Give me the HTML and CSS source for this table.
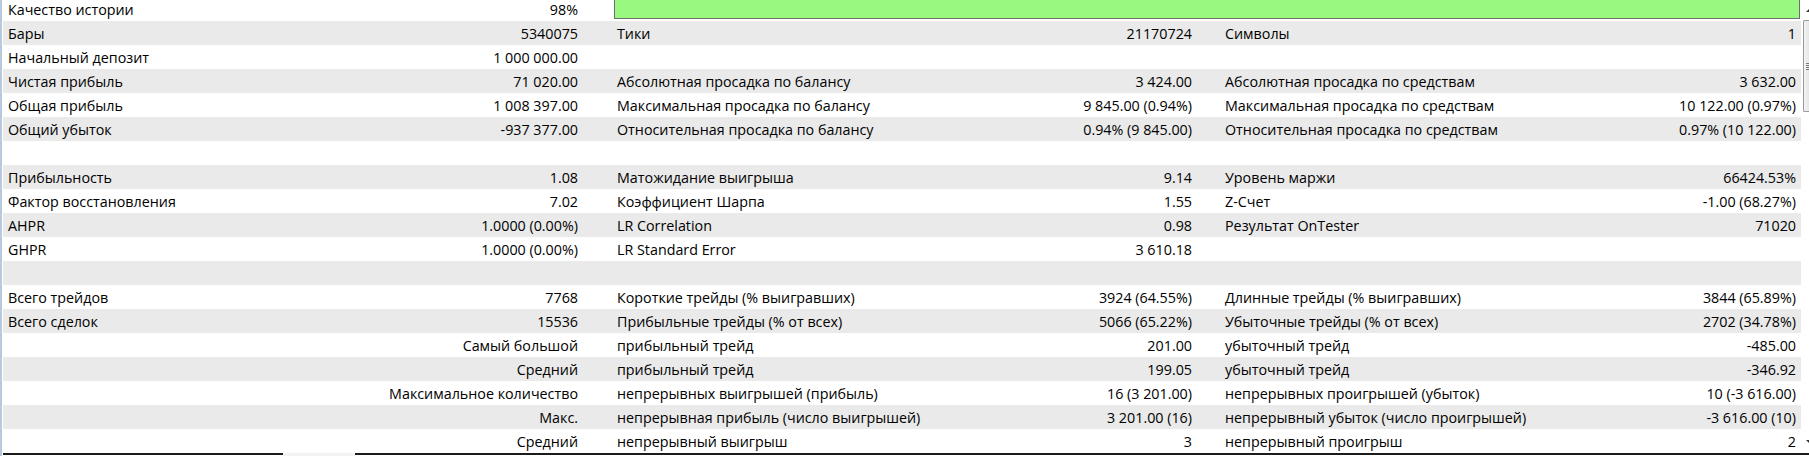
FILE: index.html
```html
<!DOCTYPE html>
<html lang="ru">
<head>
  <meta charset="UTF-8">
  <title>Отчет тестера</title>
  <link rel="stylesheet" href="styles.css">
</head>
<body>
  <div class="window">
    <div class="frame">
      <!-- Report table -->
      <div class="report">
        <div class="row">
          <div class="c1">Качество истории</div><div class="c2">98%</div>
          <div class="bar-cell"><div class="quality-bar"></div></div>
        </div>
        <div class="row">
          <div class="c1">Бары</div><div class="c2">5340075</div>
          <div class="c3">Тики</div><div class="c4">21170724</div>
          <div class="c5">Символы</div><div class="c6">1</div>
        </div>
        <div class="row">
          <div class="c1">Начальный депозит</div><div class="c2">1 000 000.00</div>
        </div>
        <div class="row">
          <div class="c1">Чистая прибыль</div><div class="c2">71 020.00</div>
          <div class="c3">Абсолютная просадка по балансу</div><div class="c4">3 424.00</div>
          <div class="c5">Абсолютная просадка по средствам</div><div class="c6">3 632.00</div>
        </div>
        <div class="row">
          <div class="c1">Общая прибыль</div><div class="c2">1 008 397.00</div>
          <div class="c3">Максимальная просадка по балансу</div><div class="c4">9 845.00 (0.94%)</div>
          <div class="c5">Максимальная просадка по средствам</div><div class="c6">10 122.00 (0.97%)</div>
        </div>
        <div class="row">
          <div class="c1">Общий убыток</div><div class="c2">-937 377.00</div>
          <div class="c3">Относительная просадка по балансу</div><div class="c4">0.94% (9 845.00)</div>
          <div class="c5">Относительная просадка по средствам</div><div class="c6">0.97% (10 122.00)</div>
        </div>
        <div class="row"></div>
        <div class="row">
          <div class="c1">Прибыльность</div><div class="c2">1.08</div>
          <div class="c3">Матожидание выигрыша</div><div class="c4">9.14</div>
          <div class="c5">Уровень маржи</div><div class="c6">66424.53%</div>
        </div>
        <div class="row">
          <div class="c1">Фактор восстановления</div><div class="c2">7.02</div>
          <div class="c3">Коэффициент Шарпа</div><div class="c4">1.55</div>
          <div class="c5">Z-Счет</div><div class="c6">-1.00 (68.27%)</div>
        </div>
        <div class="row">
          <div class="c1">AHPR</div><div class="c2">1.0000 (0.00%)</div>
          <div class="c3">LR Correlation</div><div class="c4">0.98</div>
          <div class="c5">Результат OnTester</div><div class="c6">71020</div>
        </div>
        <div class="row">
          <div class="c1">GHPR</div><div class="c2">1.0000 (0.00%)</div>
          <div class="c3">LR Standard Error</div><div class="c4">3 610.18</div>
        </div>
        <div class="row"></div>
        <div class="row">
          <div class="c1">Всего трейдов</div><div class="c2">7768</div>
          <div class="c3">Короткие трейды (% выигравших)</div><div class="c4">3924 (64.55%)</div>
          <div class="c5">Длинные трейды (% выигравших)</div><div class="c6">3844 (65.89%)</div>
        </div>
        <div class="row">
          <div class="c1">Всего сделок</div><div class="c2">15536</div>
          <div class="c3">Прибыльные трейды (% от всех)</div><div class="c4">5066 (65.22%)</div>
          <div class="c5">Убыточные трейды (% от всех)</div><div class="c6">2702 (34.78%)</div>
        </div>
        <div class="row">
          <div class="c12">Самый большой</div>
          <div class="c3">прибыльный трейд</div><div class="c4">201.00</div>
          <div class="c5">убыточный трейд</div><div class="c6">-485.00</div>
        </div>
        <div class="row">
          <div class="c12">Средний</div>
          <div class="c3">прибыльный трейд</div><div class="c4">199.05</div>
          <div class="c5">убыточный трейд</div><div class="c6">-346.92</div>
        </div>
        <div class="row">
          <div class="c12">Максимальное количество</div>
          <div class="c3">непрерывных выигрышей (прибыль)</div><div class="c4">16 (3 201.00)</div>
          <div class="c5">непрерывных проигрышей (убыток)</div><div class="c6">10 (-3 616.00)</div>
        </div>
        <div class="row">
          <div class="c12">Макс.</div>
          <div class="c3">непрерывная прибыль (число выигрышей)</div><div class="c4">3 201.00 (16)</div>
          <div class="c5">непрерывный убыток (число проигрышей)</div><div class="c6">-3 616.00 (10)</div>
        </div>
        <div class="row">
          <div class="c12">Средний</div>
          <div class="c3">непрерывный выигрыш</div><div class="c4">3</div>
          <div class="c5">непрерывный проигрыш</div><div class="c6">2</div>
        </div>
      </div>

      <!-- Scrollbar (cut off by the window edge) -->
      <div class="scrollbar">
        <div class="sb-arrow up"></div>
        <div class="sb-thumb"><span class="grip"></span></div>
        <div class="sb-track"></div>
        <div class="sb-arrow down"></div>
      </div>
    </div>

    <!-- Tabs strip -->
    <div class="tabs">
      <div class="tab-line first"></div>
      <div class="tab-active"></div>
      <div class="tab-line rest"></div>
    </div>
  </div>
</body>
</html>
```

FILE: styles.css
```css
* {
  margin: 0;
  padding: 0;
  box-sizing: border-box;
}

html, body {
  height: 100%;
  overflow: hidden;
  background: #fff;
  font-family: "Open Sans", "Noto Sans", "DejaVu Sans", sans-serif;
  font-size: 14.3px;
  color: #000;
}

/* === WINDOW === */
.window {
  height: 456px;
  display: flex;
  flex-direction: column;
  border-left: 2px solid #b9c9dd;
}

.frame {
  flex: 1;
  display: flex;
  overflow: hidden;
  padding-left: 1px;
}

/* === REPORT === */
.report {
  flex: 1;
  margin-top: -3px;
}

.row {
  display: grid;
  grid-template-columns: 297px 283px 29px 288px 297px 23px 280px 1fr;
  height: 24px;
  align-items: center;
  white-space: nowrap;
}

.row:nth-child(even) {
  background: #eaeaea;
}

.c1, .c3, .c5 {
  padding-left: 5px;
}

.c2, .c4, .c6, .c12 {
  padding-right: 5px;
  text-align: right;
}

.c1 { grid-column: 1; }
.c2 { grid-column: 2; }
.c12 { grid-column: 1 / 3; }
.c3 { grid-column: 4; }
.c4 { grid-column: 5; }
.c5 { grid-column: 7; }
.c6 { grid-column: 8; }

.bar-cell {
  grid-column: 4 / 9;
  align-self: stretch;
  padding: 0 1px 2px 2px;
}

.quality-bar {
  height: 100%;
  background: #98f880;
  border: 1px solid #6f6f6f;
  border-top: none;
}

/* === SCROLLBAR === */
.scrollbar {
  width: 8px;
  display: flex;
  flex-direction: column;
  background: #fff;
}

.sb-arrow {
  height: 20px;
  display: flex;
  align-items: center;
  justify-content: flex-end;
}

.sb-arrow::after {
  content: "";
  width: 0;
  height: 0;
  border-left: 3px solid transparent;
}

.sb-arrow.up::after {
  border-bottom: 3px solid #333;
}

.sb-arrow.down::after {
  border-top: 3px solid #333;
}

.sb-arrow.down {
  height: 24px;
}

.sb-thumb {
  height: 92px;
  margin-left: 2px;
  border: 1px solid #9a9a9a;
  border-right: none;
  border-radius: 2px 0 0 2px;
  background: linear-gradient(to right, #f4f4f4, #e6e6e6);
  display: flex;
  align-items: center;
  justify-content: flex-end;
}

.grip {
  width: 3px;
  height: 7px;
  background: repeating-linear-gradient(to bottom, #777 0 1px, transparent 1px 2px);
}

.sb-track {
  flex: 1;
}

/* === TABS === */
.tabs {
  height: 3px;
  display: flex;
  padding-left: 1px;
}

.tab-line {
  border-top: 2px solid #1b1b1b;
}

.tab-line.first {
  width: 280px;
}

.tab-active {
  width: 72px;
  background: #f2f2f2;
}

.tab-line.rest {
  flex: 1;
}
```
